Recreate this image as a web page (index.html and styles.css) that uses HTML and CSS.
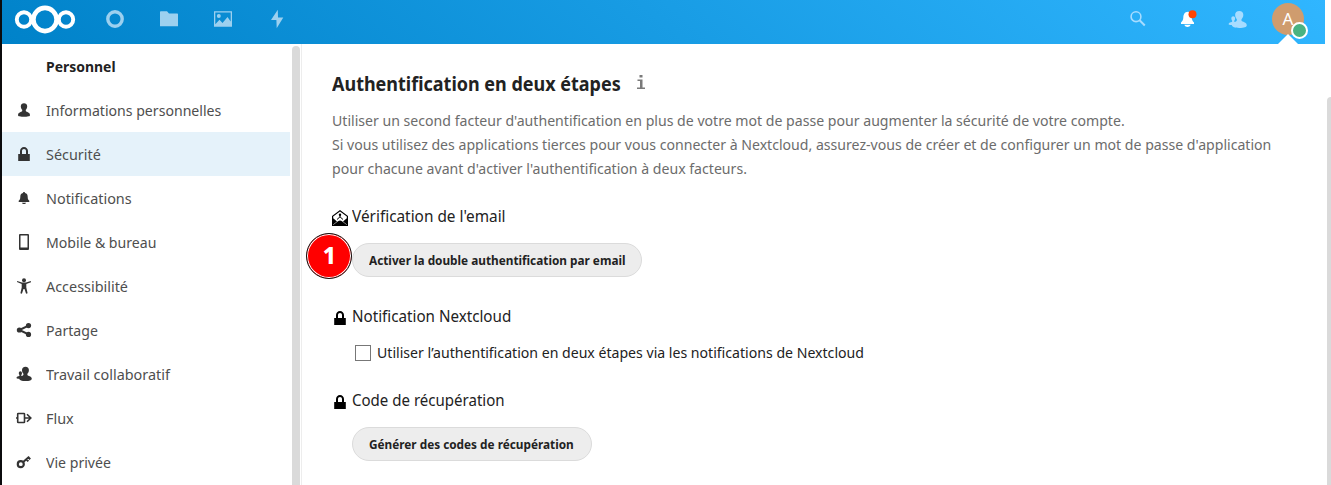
FILE: index.html
```
<!DOCTYPE html>
<html lang="fr">
<head>
<meta charset="utf-8">
<title>Sécurité</title>
<link rel="stylesheet" href="styles.css">
</head>
<body>
<svg class="defs" aria-hidden="true">
  <symbol id="user" viewBox="0 0 16 16"><path d="M8 1.200C6.200 1.200 4.800 2.400 4.800 4.200c0 1.600.6 2.800 1.400 3.600.2.900 0 1.500-.4 1.800C4.300 10.200 2 10.900 2 12.900c0 .8.500 1.200 1.500 1.400 1.500.4 3 .5 4.500.5s3-.1 4.500-.5c1-.2 1.500-.6 1.500-1.400 0-2-2.300-2.700-3.800-3.300-.4-.3-.6-.9-.4-1.800.8-.8 1.400-2 1.400-3.600 0-1.800-1.400-3-3.200-3z"/></symbol>
  <symbol id="lock" viewBox="0 0 16 16"><path d="M8 1C5.800 1 4 2.800 4 5v3H2.200v7h11.600V8H12V5c0-2.200-1.800-4-4-4zm0 2c1.200 0 2 .9 2 2v3H6V5c0-1.100.8-2 2-2z"/></symbol>
  <symbol id="bell" viewBox="0 0 16 16"><path d="M8 2c-.6 0-1 .4-1 1-2 .4-2.700 2-2.700 3.700 0 2.300-.4 3-1.600 4.100V12h10.600v-1.200c-1.200-1.100-1.600-1.800-1.600-4.100 0-1.700-.7-3.300-2.700-3.700 0-.6-.4-1-1-1zM5.800 12.800c.4.800 1.200 1.300 2.200 1.300s1.800-.5 2.200-1.300z"/></symbol>
  <symbol id="contacts" viewBox="0 0 16 16"><path d="M9.500.8C7.300.8 6 2.100 6 4.100c0 1.700.6 2.800 1.400 3.700.2.900 0 1.300-.4 1.600-.5.300-1 .4-1.500.6-.3-.3-.3-.7-.2-1 .400-.4.700-1 .7-1.800 0-1.300-.7-2-1.600-2S2.800 5.900 2.800 7.200c0 .8.300 1.400.7 1.800.1.500 0 .8-.3 1-.8.300-2.700.5-2.700 1.700 0 .6.700.9 2.700 1 .2 1.700 2.600 2.400 6.300 2.400 4.200 0 6.300-.7 6.300-2.300 0-2.100-2.600-2.700-4-3.300-.4-.3-.6-.9-.4-1.700.9-.9 1.500-2 1.500-3.700 0-2-1.200-3.300-3.400-3.300z"/></symbol>
</svg>
<header class="topbar">
  <svg class="logo" viewBox="0 0 62 30" fill="none" stroke="#fff"><circle cx="10" cy="15.500" r="7.200" stroke-width="3.900"/><circle cx="31" cy="15.500" r="11.600" stroke-width="4.600"/><circle cx="52" cy="15.500" r="7.200" stroke-width="3.900"/></svg>
  <nav class="apps">
    <svg viewBox="0 0 20 20"><circle cx="10" cy="10" r="7.200" fill="none" stroke="currentColor" stroke-width="3.400"/></svg>
    <svg viewBox="0 0 20 20"><path fill="currentColor" d="M1 3q0-.8.800-.8H8L10 4.500h8.300q.7 0 .7.700v12H1z"/></svg>
    <svg viewBox="0 0 20 20"><path fill="currentColor" fill-rule="evenodd" d="M1 2.200h18v15.500H1zM2.300 3.500v11.800l4.200-4.600 3 3.200 5-5.800 3.200 4.300V3.500zM5.800 5a2 2 0 1 1 0 4 2 2 0 0 1 0-4z"/></svg>
    <svg viewBox="0 0 20 20"><path fill="currentColor" d="M10.800.8 4 11h5.400l.3 8.200L16.300 8.500H11z"/></svg>
  </nav>
  <div class="tools">
    <svg class="dim" viewBox="0 0 20 20" fill="none" stroke="currentColor"><circle cx="8" cy="7.700" r="4.900" stroke-width="1.600"/><path stroke-width="2" d="m11.600 11.300 5.200 5.200"/></svg>
    <svg viewBox="0 0 20 20"><path fill="#fff" d="M10 2.800C6.500 3 5.500 5.500 5.300 8.500c-.1 2-.6 3.500-2.300 5V15h13v-1.500c-1.500-1.300-2.200-3-2.300-5C13.500 5.500 12.800 3 10 2.800zM6.300 15.800c.7 1.400 1.800 2.200 3.200 2.200s2.500-.8 3.200-2.200z"/><circle cx="14.500" cy="5.300" r="4" fill="#ff4402"/></svg>
    <svg class="dim" viewBox="0 0 16 16" fill="currentColor"><use href="#contacts"/></svg>
    <div class="avatar">A<i class="status"></i><i class="caret"></i></div>
  </div>
</header>
<div class="body">
  <aside class="sidebar">
    <ul class="menu">
      <li class="title"><span class="text w93">Personnel</span></li>
      <li><svg viewBox="0 0 16 16"><use href="#user"/></svg><span class="text">Informations personnelles</span></li>
      <li class="active"><svg viewBox="0 0 16 16"><use href="#lock"/></svg><span class="text w96">Sécurité</span></li>
      <li><svg viewBox="0 0 16 16"><use href="#bell"/></svg><span class="text w96">Notifications</span></li>
      <li><svg viewBox="0 0 16 16"><path fill-rule="evenodd" d="M4 0h8q1 0 1 1v14q0 1-1 1H4q-1 0-1-1V1q0-1 1-1zM4.500 1.600v11.900h7V1.600z"/></svg><span class="text">Mobile &amp; bureau</span></li>
      <li><svg viewBox="0 0 16 16"><circle cx="8" cy="2.200" r="2"/><path d="m1 4 .2-.9L6 4.500h4l4.800-1.400.2 1.100L10.300 6v3.500l1.300 5.800-1.500.4L8.500 11h-1l-1.600 4.700-1.500-.4 1.300-5.800V6z"/></svg><span class="text w96">Accessibilité</span></li>
      <li><svg viewBox="0 0 16 16"><path d="m3.500 8 9-4.300M3.500 8l9 4.300" stroke="#333" stroke-width="2"/><circle cx="3.400" cy="8" r="2.600"/><circle cx="12.500" cy="3.600" r="2.600"/><circle cx="12.500" cy="12.400" r="2.600"/></svg><span class="text">Partage</span></li>
      <li><svg viewBox="0 0 16 16"><use href="#contacts"/></svg><span class="text w96">Travail collaboratif</span></li>
      <li><svg viewBox="0 0 16 16" class="line"><rect x="1.700" y="3.500" width="6.800" height="9" rx=".6"/><path d="M0 8h1.500M8.500 8H15M11 4.300 14.800 8 11 11.700"/></svg><span class="text w96">Flux</span></li>
      <li><svg viewBox="0 0 16 16" class="line"><circle cx="4.800" cy="10.200" r="3" stroke-width="2.200"/><path stroke-width="2" d="m7.200 8.100 6-5.300M10.500 5.300l1.800 2M12.500 3.500l1.700 1.800"/></svg><span class="text">Vie privée</span></li>
    </ul>
    <div class="scroll"></div>
  </aside>
  <main class="content">
    <h2><span class="text w90">Authentification en deux étapes</span><svg class="info" viewBox="0 0 10 16"><path d="M3.500 1h3v2.500h-3zM1.500 5.500h5v8H9V15H1v-1.500h3V7H1.500z"/></svg></h2>
    <p class="desc text">Utiliser un second facteur d'authentification en plus de votre mot de passe pour augmenter la sécurité de votre compte.<br>Si vous utilisez des applications tierces pour vous connecter à Nextcloud, assurez-vous de créer et de configurer un mot de passe d'application<br>pour chacune avant d'activer l'authentification à deux facteurs.</p>
    <section class="email">
      <h3><svg viewBox="0 0 16 16"><path fill-rule="evenodd" d="M8 0l8 6v10H0V6zM8 1.400 1.200 6.500v1.800L5 11.500l-3.800 3V15L6 11.300q2-1.500 4 0l4.800 3.700v-.5l-3.800-3 3.800-3.200V6.500z"/><path fill="none" stroke="#000" d="m5 9.500 3-2.700 3 2.700M8 4v3"/><circle cx="8" cy="4.700" r="1.200"/></svg><span class="text w96">Vérification de l'email</span></h3>
      <div class="action"><b class="step">1</b><button class="wide"><span class="text w91">Activer la double authentification par email</span></button></div>
    </section>
    <section class="notif">
      <h3><svg viewBox="0 0 16 16"><use href="#lock"/></svg><span class="text w95">Notification Nextcloud</span></h3>
      <label><i class="box"></i><span class="text">Utiliser l’authentification en deux étapes via les notifications de Nextcloud</span></label>
    </section>
    <section>
      <h3><svg viewBox="0 0 16 16"><use href="#lock"/></svg><span class="text">Code de récupération</span></h3>
      <div class="action"><button><span class="text w91">Générer des codes de récupération</span></button></div>
    </section>
  </main>
  <div class="pagescroll"></div>
</div>
</body>
</html>
```
FILE: styles.css
```
* { box-sizing: border-box; }
body { margin: 0; height: 485px; overflow: hidden; border-left: 2px solid #0b0b0d; background: #fff; color: #222; font: 15px/24px "Noto Sans", sans-serif; white-space: nowrap; }
svg { display: block; flex: none; }
.defs { display: none; }
/* Slightly condensed lettering */
.text { display: block; flex: none; transform: scaleX(.94); transform-origin: 0 50%; }
.w90 { transform: scaleX(.899); }
.w91 { transform: scaleX(.907); }
.w93 { transform: scaleX(.93); }
.w95 { transform: scaleX(.948); }
.w96 { transform: scaleX(.96); }
.topbar { display: flex; align-items: center; width: 1323px; height: 44px; padding: 0 21px 6px 12px; background: linear-gradient(40deg, #0082c9 0%, #30b6ff 100%); }
.logo { width: 62px; height: 30px; }
.apps { display: flex; gap: 34px; margin-left: 29px; color: #9cd0ef; }
.apps svg { width: 20px; height: 20px; }
.tools { display: flex; align-items: center; gap: 30px; margin-left: auto; color: #fff; }
.tools svg { width: 20px; height: 20px; }
.tools .dim { color: #a7dcff; }
.tools svg:nth-child(3) { width: 19px; height: 19px; margin-right: 1px; }
.avatar { position: relative; width: 32px; height: 32px; margin-left: -6px; border-radius: 50%; background: #cf9c6e; font-size: 17px; line-height: 32px; text-align: center; }
.status { position: absolute; left: 19px; top: 19px; z-index: 2; width: 17px; height: 17px; border: 2px solid #fff; border-radius: 50%; background: #49b382; }
.caret { position: absolute; left: 6px; top: 31px; border: 10px solid transparent; border-top: 0; border-bottom-color: #fff; }
.body { display: flex; height: 441px; }
.sidebar { display: flex; flex: none; width: 300px; border-right: 1px solid #ededed; }
.menu { width: 288px; margin: 0; padding: 0; list-style: none; }
.menu li { display: flex; align-items: center; height: 44px; padding-left: 14px; gap: 14px; color: #4e4e4e; fill: #333; }
.menu svg { width: 16px; height: 16px; }
.menu .title { padding-left: 44px; color: #222; font-weight: 700; }
.menu .active { background: #e5f2fa; }
.line { fill: none; stroke: #333; stroke-width: 1.6; }
.scroll { width: 8px; height: 450px; margin: 2px 0 0 2px; border-radius: 4px; background: #dadada; }
.content { flex: 1; min-width: 0; padding: 28px 0 0 30px; }
h2 { display: flex; align-items: center; height: 24px; margin: 0 0 12px; font-size: 20px; }
.info { width: 10px; height: 16px; fill: #7a7a7a; margin: -5px 0 0 -17px; }
.desc { margin: 0 0 24px; color: #6c6c6c; }
h3 { display: flex; align-items: center; gap: 4px; height: 24px; margin: 0; font-size: 16px; font-weight: 400; }
h3 svg { width: 16px; height: 16px; margin-top: 3px; }
.action { position: relative; display: flex; margin: 15px 0 27px 20px; }
button { display: flex; align-items: center; width: 240px; height: 34px; padding: 0 0 0 16px; border: 1px solid #dbdbdb; border-radius: 17px; background: #ededed; color: #222; font: inherit; font-size: 13px; font-weight: 700; }
.wide { width: 290px; }
.step { position: absolute; left: -46px; top: -10px; z-index: 1; display: flex; align-items: center; justify-content: center; width: 46px; height: 46px; padding: 0 0 2px 1px; border: 1.500px solid #111; border-radius: 50%; background: red; box-shadow: inset 0 0 0 1px #fff; color: #fff; font-size: 23px; font-weight: 800; }
.notif { margin-bottom: 24px; }
label { display: flex; align-items: center; gap: 6px; height: 24px; margin: 12px 0 0 23px; }
.box { width: 16px; height: 16px; margin-top: 1px; border: 1px solid #777; }
.pagescroll { flex: none; width: 4px; height: 400px; margin-top: 53px; border-radius: 4px 0 0 0; background: #dadada; }
```
